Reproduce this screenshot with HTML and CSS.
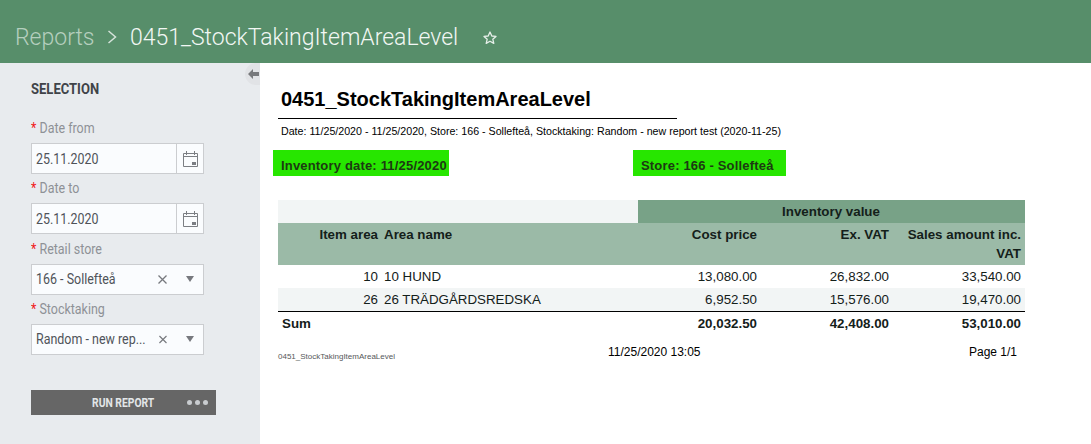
FILE: index.html
```html
<!DOCTYPE html>
<html lang="en">

<head>
    <meta charset="UTF-8">
    <title>0451_StockTakingItemAreaLevel</title>
    <link rel="stylesheet" href="styles.css">
</head>

<body>

    <header class="topbar">
        <span class="crumb">Reports</span>
        <svg class="crumb-arrow" width="10" height="16" viewBox="0 0 10 16"><path d="M1.500 2l7 6-7 6" fill="none" stroke="currentColor" stroke-width="1.500"/></svg>
        <h1 class="page-title">0451_StockTakingItemAreaLevel</h1>
        <svg class="star" width="16" height="16" viewBox="0 0 16 16"><path d="M8 2l1.800 4 4.200.4-3.200 2.800 1 4.200L8 11.200 4.200 13.400l1-4.200L2 6.400 6.200 6z" fill="none" stroke="currentColor" stroke-width="1.300" stroke-linejoin="round"/></svg>
    </header>

    <div class="page">
        <aside class="sidebar">
            <span class="collapse">
                <svg width="11" height="10" viewBox="0 0 11 10"><path d="M0 5l5-5v3h6v4H5v3z" fill="currentColor"/></svg>
            </span>
            <h2 class="side-title">SELECTION</h2>

            <label class="field-label"><b>*</b> Date from</label>
            <div class="input">
                <span class="input-value">25.11.2020</span>
                <span class="cal">
                    <svg width="15" height="16" viewBox="0 0 15 16"><path d="M.5 2.500h14v13H.5zM.5 5.500h14M3.500 0v4M11.500 0v4" fill="none" stroke="currentColor"/><path d="M9 11h4v3H9z" fill="currentColor"/></svg>
                </span>
            </div>

            <label class="field-label"><b>*</b> Date to</label>
            <div class="input">
                <span class="input-value">25.11.2020</span>
                <span class="cal">
                    <svg width="15" height="16" viewBox="0 0 15 16"><path d="M.5 2.500h14v13H.5zM.5 5.500h14M3.500 0v4M11.500 0v4" fill="none" stroke="currentColor"/><path d="M9 11h4v3H9z" fill="currentColor"/></svg>
                </span>
            </div>

            <label class="field-label"><b>*</b> Retail store</label>
            <div class="input">
                <span class="input-value">166 - Sollefteå</span>
                <svg class="clear" width="9" height="9" viewBox="0 0 9 9"><path d="M.5.500l8 8M8.500.500l-8 8" fill="none" stroke="currentColor" stroke-width="1.300"/></svg>
                <span class="caret"></span>
            </div>

            <label class="field-label"><b>*</b> Stocktaking</label>
            <div class="input">
                <span class="input-value">Random - new rep...</span>
                <svg class="clear" width="9" height="9" viewBox="0 0 9 9"><path d="M.5.500l8 8M8.500.500l-8 8" fill="none" stroke="currentColor" stroke-width="1.300"/></svg>
                <span class="caret"></span>
            </div>

            <button class="run">
                <span class="run-label">RUN REPORT</span>
                <span class="dots"><i></i><i></i><i></i></span>
            </button>
        </aside>

        <main class="report">
            <h2 class="report-title">0451_StockTakingItemAreaLevel</h2>
            <p class="report-params">Date: 11/25/2020 - 11/25/2020, Store: 166 - Sollefteå, Stocktaking: Random - new report test (2020-11-25)</p>

            <div class="tags">
                <div class="tag tag-date">Inventory date: 11/25/2020</div>
                <div class="tag tag-store">Store: 166 - Sollefteå</div>
            </div>

            <table class="data">
                <colgroup>
                    <col class="c-item">
                    <col class="c-name">
                    <col class="c-cost">
                    <col class="c-vat">
                    <col class="c-sales">
                </colgroup>
                <thead>
                    <tr class="group-row">
                        <th colspan="2" class="blank"></th>
                        <th colspan="3">Inventory value</th>
                    </tr>
                    <tr class="head-row">
                        <th class="num">Item area</th>
                        <th class="txt">Area name</th>
                        <th class="num">Cost price</th>
                        <th class="num">Ex. VAT</th>
                        <th class="num">Sales amount inc. VAT</th>
                    </tr>
                </thead>
                <tbody>
                    <tr>
                        <td class="num">10</td>
                        <td class="txt">10 HUND</td>
                        <td class="num">13,080.00</td>
                        <td class="num">26,832.00</td>
                        <td class="num">33,540.00</td>
                    </tr>
                    <tr class="alt">
                        <td class="num">26</td>
                        <td class="txt">26 TRÄDGÅRDSREDSKA</td>
                        <td class="num">6,952.50</td>
                        <td class="num">15,576.00</td>
                        <td class="num">19,470.00</td>
                    </tr>
                </tbody>
                <tfoot>
                    <tr>
                        <td colspan="2" class="sum-label">Sum</td>
                        <td class="num">20,032.50</td>
                        <td class="num">42,408.00</td>
                        <td class="num">53,010.00</td>
                    </tr>
                </tfoot>
            </table>

            <footer class="report-foot">
                <span class="foot-name">0451_StockTakingItemAreaLevel</span>
                <span class="foot-date">11/25/2020 13:05</span>
                <span class="foot-page">Page 1/1</span>
            </footer>
        </main>
    </div>

</body>

</html>
```

FILE: styles.css
```css
body {
    margin: 0;
    height: 444px;
    overflow: hidden;
    background-color: white;
    font-family: Roboto, sans-serif;
}

.topbar {
    height: 63px;
    box-sizing: border-box;
    padding: 24px 0 0 15px;
    display: flex;
    align-items: flex-start;
    background-color: #578e6a;
    color: white;
    font-weight: 300;
    font-size: 23px;
    line-height: 27px;
}

.crumb {
    color: #b5cfbe;
    width: 79px;
}

.crumb-arrow {
    margin: 5px 0 0 13px;
    color: #d5e3da;
}

.page-title {
    margin: 0 0 0 13px;
    font: inherit;
    color: #f2f7f4;
}

.star {
    margin: 6px 0 0 24px;
    color: #e6efe9;
}

.page {
    display: flex;
    height: 381px;
}

/* venstre kolonne - smal skrift findes ikke, saa teksten presses lidt */
.sidebar {
    width: 260px;
    box-sizing: border-box;
    padding: 17px 0 0 31px;
    position: relative;
    background-color: #e8ebee;
}

.collapse {
    position: absolute;
    top: 0;
    right: 0;
    width: 15px;
    height: 22px;
    border-radius: 11px 0 0 11px;
    background-color: #e1e3e6;
    color: #77797c;
    display: flex;
    align-items: center;
    padding-left: 3px;
    box-sizing: border-box;
}

.side-title {
    margin: 0 0 22px;
    font-size: 14px;
    line-height: 18px;
    font-weight: 700;
    color: #3f4348;
    transform: scaleX(.93);
    transform-origin: left;
}

.field-label {
    display: block;
    height: 16px;
    margin-bottom: 7px;
    font-size: 14px;
    line-height: 16px;
    color: #8e9196;
    transform: scaleX(.89);
    transform-origin: left;
}

.field-label b {
    color: #f01818;
    font-weight: 400;
}

.input {
    width: 173px;
    height: 31px;
    box-sizing: border-box;
    margin-bottom: 6.330px;
    padding-left: 4px;
    display: flex;
    align-items: center;
    background-color: #fafcfe;
    border: 1px solid #cbcdd0;
    color: #4f5359;
    font-size: 14px;
}

.input-value {
    flex: 1;
    white-space: nowrap;
    transform: scaleX(.89);
    transform-origin: left;
}

.cal {
    width: 26px;
    height: 100%;
    display: flex;
    align-items: center;
    justify-content: center;
    border-left: 1px solid #cbcdd0;
    color: #7b7e83;
}

.clear {
    color: #77797e;
    margin-right: 19px;
}

.caret {
    width: 0;
    height: 0;
    margin-right: 9px;
    border-left: 4px solid transparent;
    border-right: 4px solid transparent;
    border-top: 6px solid #77797e;
}

.run {
    width: 185px;
    height: 25px;
    margin-top: 35.500px;
    padding: 0;
    position: relative;
    display: block;
    border: 0;
    background-color: #666666;
    color: #e3e6e8;
    font-family: Roboto, sans-serif;
    font-size: 12px;
    font-weight: 700;
    text-align: center;
}

.run-label {
    display: inline-block;
    transform: scaleX(.86);
}

.dots {
    position: absolute;
    top: 10px;
    right: 8px;
    display: flex;
    gap: 3px;
}

.dots i {
    width: 5px;
    height: 5px;
    border-radius: 50%;
    background-color: #c9cccf;
}

/* rapport */
.report {
    flex: 1;
    padding: 24px 0 0 13px;
    font-family: "Liberation Sans", Arial, sans-serif;
    color: black;
}

.report-title {
    width: 399px;
    margin: 0 0 0 5px;
    padding: 0 0 6px 3px;
    box-sizing: border-box;
    border-bottom: 1px solid black;
    font-size: 20px;
    line-height: 25px;
}

.report-params {
    margin: 6px 0 0 8px;
    font-size: 10.670px;
    line-height: 13px;
}

.tags {
    display: flex;
    margin-top: 12px;
}

.tag {
    height: 26px;
    box-sizing: border-box;
    padding-left: 8px;
    background-color: #27e600;
    color: #1c3a12;
    font-size: 13px;
    font-weight: 700;
    line-height: 31px;
    letter-spacing: 0.18px;
}

.tag-date {
    width: 176px;
}

.tag-store {
    width: 153px;
    margin-left: 184px;
}

.data {
    width: 747px;
    margin: 24px 0 0 5px;
    border-collapse: collapse;
    table-layout: fixed;
    font-size: 13.330px;
}

.c-item {
    width: 103px;
}

.c-name {
    width: 257px;
}

.c-cost {
    width: 122px;
}

.c-vat {
    width: 132px;
}

.c-sales {
    width: 133px;
}

.data th,
.data td {
    padding: 0 3px;
    color: #14201a;
}

.data th:last-child,
.data td:last-child {
    padding-right: 4px;
}

.num {
    text-align: right;
}

.txt {
    text-align: left;
}

.group-row th {
    height: 23px;
    background-color: #78a287;
}

.group-row .blank {
    background-color: #f2f5f5;
}

.head-row th {
    height: 42px;
    padding-top: 2px;
    box-sizing: border-box;
    vertical-align: top;
    background-color: #9bbaa7;
    line-height: 19px;
}

.data tbody td {
    height: 23px;
}

.data tbody .alt td {
    background-color: #f2f5f5;
}

.data tfoot td {
    height: 23px;
    border-top: 1px solid black;
    font-weight: 700;
}

.data .sum-label {
    padding-left: 4px;
}

.report-foot {
    width: 747px;
    height: 20px;
    margin: 10px 0 0 5px;
    position: relative;
    font-size: 12px;
    line-height: 15px;
}

.foot-name {
    position: absolute;
    left: 0;
    top: 4px;
    font-size: 8px;
    color: #55585a;
}

.foot-date {
    position: absolute;
    left: 330px;
    top: 0;
}

.foot-page {
    position: absolute;
    right: 8px;
    top: 0;
}
```
